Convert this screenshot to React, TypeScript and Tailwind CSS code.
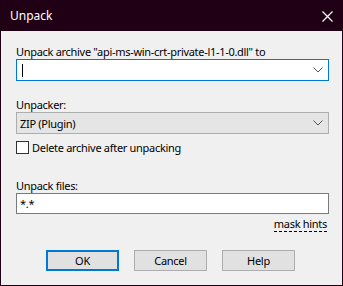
import React from "react";

function Chevron() {
  return (
    <svg width="10" height="6" viewBox="0 0 10 6" className="shrink-0">
      <path d="M0.5 0.5 L5 5 L9.5 0.5" fill="none" stroke="#555" strokeWidth="1" />
    </svg>
  );
}

export default function App() {
  const font = {fontFamily: '"Segoe UI", "Noto Sans", sans-serif'};
  return (
    <div className="w-[343px] h-[286px] bg-[#200014] p-px flex flex-col text-[11px] tracking-[-0.3px] text-black" style={font}>
      <div className="h-[30px] flex items-center justify-between pl-[9px] pr-[9px] text-white">
        <span className="leading-[16px] text-[12px] tracking-normal">Unpack</span>
        <svg width="11" height="11" viewBox="0 0 11 11">
          <path d="M0.5 0.5 L10.5 10.5 M10.5 0.5 L0.5 10.5" stroke="#fff" strokeWidth="1.2" />
        </svg>
      </div>
      <div className="flex-1 bg-[#f0f0f0] pl-[15px] flex flex-col">
        <div className="mt-[13px] leading-[15px]">Unpack archive "api-ms-win-crt-private-l1-1-0.dll" to</div>
        <div className="w-[313px] h-[22px] bg-white border border-[#0078d7] flex items-center pl-[5px] pr-[5px]">
          <span className="w-px h-[13px] bg-black" />
          <span className="flex-1" />
          <Chevron />
        </div>
        <div className="mt-[16px] leading-[15px]">Unpacker:</div>
        <div className="w-[313px] h-[22px] bg-[#e5e5e5] border border-[#adadad] flex items-center pl-[3px] pr-[5px]">
          <span className="flex-1 leading-[15px]">ZIP (Plugin)</span>
          <Chevron />
        </div>
        <div className="mt-[6px] flex items-center gap-[3px]">
          <span className="w-[13px] h-[13px] bg-white border border-[#333]" />
          <span className="leading-[15px]">Delete archive after unpacking</span>
        </div>
        <div className="mt-[23px] leading-[15px]">Unpack files:</div>
        <div className="w-[313px] h-[21px] bg-white border border-[#7a7a7a] flex items-center pl-[3px]">
          <span className="leading-[15px]">*.*</span>
        </div>
        <div className="w-[311px] flex justify-end mt-[3px]">
          <span className="leading-[14px] border-b border-dashed border-black">mask hints</span>
        </div>
        <div className="mt-[18px] flex gap-[15px] pl-[30px]">
          <button className="w-[73px] h-[21px] bg-[#e1e1e1] border-2 border-[#0078d7] leading-[15px]">OK</button>
          <button className="w-[73px] h-[21px] bg-[#e1e1e1] border border-[#adadad] leading-[15px]">Cancel</button>
          <button className="w-[73px] h-[21px] bg-[#e1e1e1] border border-[#adadad] leading-[15px]">Help</button>
        </div>
      </div>
    </div>
  );
}
